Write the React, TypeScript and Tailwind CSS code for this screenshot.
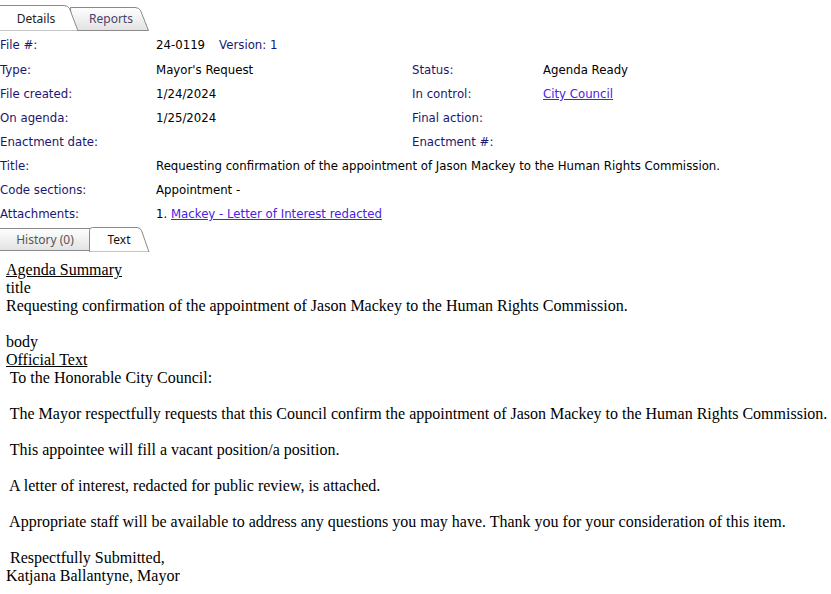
const label = "text-[#1c1670]";
const val = "text-black";
const link = "text-[#4b22e0] underline";

function Row({ a, b, c, d }: { a: string; b: React.ReactNode; c?: string; d?: React.ReactNode }) {
  return (
    <div className="grid h-6 grid-cols-[156px_256px_131px_1fr] items-center">
      <span className={label}>{a}</span>
      <span className={val}>{b}</span>
      <span className={label}>{c}</span>
      <span className={val}>{d}</span>
    </div>
  );
}

function TopTabs() {
  return (
    <div className="relative mt-[4px] h-[27px] w-[150px]">
      <svg className="absolute inset-0" width="150" height="27" viewBox="0 0 150 27">
        <defs>
          <linearGradient id="g1" x1="0" y1="0" x2="0" y2="1">
            <stop offset="0" stopColor="#ffffff" />
            <stop offset="1" stopColor="#e2e2e2" />
          </linearGradient>
        </defs>
        <path d="M71.5 26.5 L70.5 3.5 H135 Q139 3.5 140.5 6.5 L148.5 26.5 Z" fill="url(#g1)" stroke="#8a8a8a" />
        <path d="M0 26.5 H148.5" stroke="#8a8a8a" />
        <path d="M-1 27 V1.5 H64 Q68 1.5 69.5 4.5 L78 27 Z" fill="#ffffff" stroke="#8a8a8a" />
      </svg>
      <div className="relative flex h-full font-['Noto_Sans',sans-serif] text-[12px]">
        <span className="w-[72px] pt-[6px] text-center text-[#222]">Details</span>
        <span className="w-[72px] pt-[6px] pl-[6px] text-center text-[#4a3f6b]">Reports</span>
      </div>
    </div>
  );
}

function BottomTabs() {
  return (
    <div className="relative -mt-[2px] h-[27px] w-[150px]">
      <svg className="absolute inset-0" width="150" height="27" viewBox="0 0 150 27">
        <defs>
          <linearGradient id="g2" x1="0" y1="0" x2="0" y2="1">
            <stop offset="0" stopColor="#ffffff" />
            <stop offset="1" stopColor="#e2e2e2" />
          </linearGradient>
        </defs>
        <path d="M-1 25.5 V3.5 H92 V25.5 Z" fill="url(#g2)" stroke="#8a8a8a" />
        <path d="M0 25.5 H89" stroke="#8a8a8a" />
        <path d="M89.5 27 V5.5 Q89.5 2.5 92.5 2.5 H137 Q140 2.5 141.5 5.5 L149 27 Z" fill="#ffffff" stroke="#8a8a8a" />
      </svg>
      <div className="relative flex h-full font-['Noto_Sans',sans-serif] text-[12px]">
        <span className="w-[90px] pt-[6px] text-center text-[#555]">History (0)</span>
        <span className="w-[58px] pt-[6px] text-center text-[#111]">Text</span>
      </div>
    </div>
  );
}

export default function App() {
  return (
    <div className="h-[594px] w-[831px] overflow-hidden bg-white">
      <TopTabs />
      <div className="font-['DejaVu_Sans',sans-serif] text-[11.75px]">
        <div className="grid h-[28px] grid-cols-[156px_1fr] items-center pt-[1px]">
          <span className={label}>File #:</span>
          <span>
            <span className={val}>24-0119</span>
            <span className={`${label} ml-[14px]`}>Version: 1</span>
          </span>
        </div>
        <Row a="Type:" b="Mayor's Request" c="Status:" d="Agenda Ready" />
        <Row a="File created:" b="1/24/2024" c="In control:" d={<a className={link}>City Council</a>} />
        <Row a="On agenda:" b="1/25/2024" c="Final action:" />
        <Row a="Enactment date:" b="" c="Enactment #:" />
        <div className="grid h-6 grid-cols-[156px_1fr] items-center">
          <span className={label}>Title:</span>
          <span className={val}>Requesting confirmation of the appointment of Jason Mackey to the Human Rights Commission.</span>
        </div>
        <div className="grid h-6 grid-cols-[156px_1fr] items-center">
          <span className={label}>Code sections:</span>
          <span className={val}>Appointment -</span>
        </div>
        <div className="grid h-6 grid-cols-[156px_1fr] items-center">
          <span className={label}>Attachments:</span>
          <span className={val}>
            1. <a className={link}>Mackey - Letter of Interest redacted</a>
          </span>
        </div>
      </div>
      <BottomTabs />
      <div className="px-[6px] pt-[9px] font-['Liberation_Serif',serif] text-[16px] leading-[18px] text-black">
        <div className="underline">Agenda Summary</div>
        <div>title</div>
        <div>Requesting confirmation of the appointment of Jason Mackey to the Human Rights Commission.</div>
        <div className="h-[18px]" />
        <div>body</div>
        <div className="underline">Official Text</div>
        <div className="whitespace-pre">{" To the Honorable City Council:"}</div>
        <div className="h-[18px]" />
        <div className="whitespace-pre">{" The Mayor respectfully requests that this Council confirm the appointment of Jason Mackey to the Human Rights Commission."}</div>
        <div className="h-[18px]" />
        <div className="whitespace-pre">{" This appointee will fill a vacant position/a position."}</div>
        <div className="h-[18px]" />
        <div className="whitespace-pre">{" A letter of interest, redacted for public review, is attached."}</div>
        <div className="h-[18px]" />
        <div className="whitespace-pre">{" Appropriate staff will be available to address any questions you may have. Thank you for your consideration of this item."}</div>
        <div className="h-[18px]" />
        <div className="whitespace-pre">{" Respectfully Submitted,"}</div>
        <div>Katjana Ballantyne, Mayor</div>
      </div>
    </div>
  );
}
